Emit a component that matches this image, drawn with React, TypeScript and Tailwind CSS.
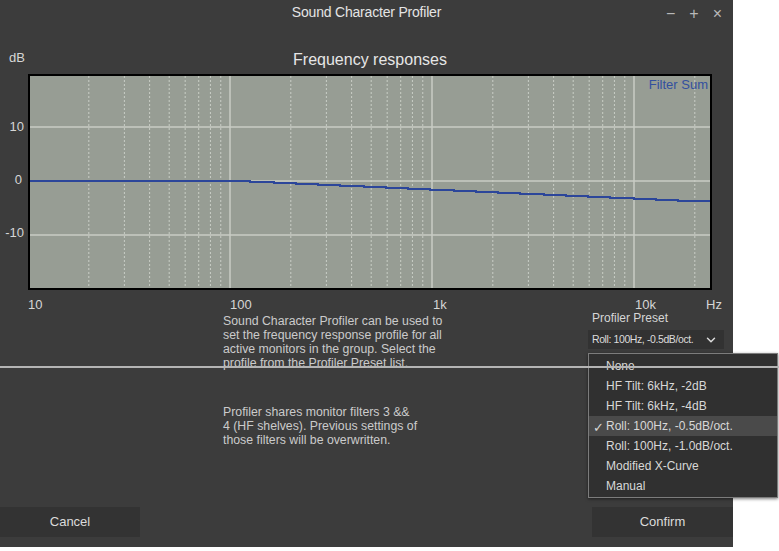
import { ChevronDown } from 'lucide-react';

const DECADE = 202;
const xOf = (f: number) => -2 + DECADE * Math.log10(f / 10);
const yOf = (db: number) => 105 - 5.4 * db;

const MINOR: number[] = [];
for (const base of [10, 100, 1000]) {
  for (let m = 2; m <= 9; m++) MINOR.push(base * m);
}
MINOR.push(20000);

const MAJOR = [100, 1000, 10000];
const H_LINES = [10, 0, -10];

const PRESETS = [
  'None',
  'HF Tilt: 6kHz, -2dB',
  'HF Tilt: 6kHz, -4dB',
  'Roll: 100Hz, -0.5dB/oct.',
  'Roll: 100Hz, -1.0dB/oct.',
  'Modified X-Curve',
  'Manual',
];
const SELECTED = 3;

function curvePoints() {
  const pts: string[] = [];
  let lastY = yOf(0);
  for (let x = 0; x <= 680; x += 2) {
    const f = 10 * Math.pow(10, (x + 2) / DECADE);
    const db = f <= 110 ? 0 : Math.max(-3.7, -0.5 * Math.log2(f / 110));
    // stepped look like the original plot
    const y = Math.round(yOf(db));
    if (y !== lastY) pts.push(`${x},${lastY}`);
    pts.push(`${x},${y}`);
    lastY = y;
  }
  return pts.join(' ');
}

function Plot() {
  return (
    <div className="w-[684px] h-[216px] border-2 border-black bg-[#979d94] relative">
      <svg width="680" height="212" className="block">
        {MINOR.map((f) => (
          <line
            key={f}
            x1={xOf(f)}
            x2={xOf(f)}
            y1={0}
            y2={212}
            stroke="#c9cec6"
            strokeWidth={1}
            strokeDasharray="2 2"
          />
        ))}
        {H_LINES.map((d) => (
          <line key={d} x1={0} x2={680} y1={yOf(d)} y2={yOf(d)} stroke="#c8cdc4" strokeWidth={1.5} />
        ))}
        {MAJOR.map((f) => (
          <line key={f} x1={xOf(f)} x2={xOf(f)} y1={0} y2={212} stroke="#c8cdc4" strokeWidth={1.5} />
        ))}
        <polyline points={curvePoints()} fill="none" stroke="#2c469a" strokeWidth={2} />
      </svg>
      <span className="absolute right-[2px] top-[-1px] text-[13px] text-[#33509f]">Filter Sum</span>
    </div>
  );
}

export default function App() {
  return (
    <div
      className="w-[779px] h-[551px] bg-white relative overflow-hidden"
      style={{ fontFamily: '"Liberation Sans", Arial, sans-serif' }}
    >
      <div className="w-[733px] h-[547px] bg-[#3c3c3c] flex flex-col">
        {/* title bar */}
        <div className="h-[25px] relative flex items-center justify-center">
          <span className="text-[14px] text-[#e4e4e4] tracking-[-0.2px]">Sound Character Profiler</span>
          <div className="absolute right-[11px] top-[2px] flex gap-[14px] text-[16px] text-[#b8b8b8]">
            <span>−</span>
            <span>+</span>
            <span>×</span>
          </div>
        </div>

        {/* heading */}
        <div className="h-[49px] flex items-end pb-[2px]">
          <span className="w-[28px] pl-[9px] text-[13px] text-[#d6d6d6] mb-[5px]">dB</span>
          <span className="w-[684px] text-center text-[16px] text-[#e6e6e6]">Frequency responses</span>
        </div>

        {/* chart */}
        <div className="flex">
          <div className="w-[28px] relative text-[13px] text-[#d6d6d6]">
            <span className="absolute right-[4px] top-[43px]">10</span>
            <span className="absolute right-[6px] top-[96px]">0</span>
            <span className="absolute right-[4px] top-[149px]">-10</span>
          </div>
          <Plot />
        </div>

        {/* x axis */}
        <div className="h-[24px] relative text-[13px] text-[#d6d6d6]">
          <span className="absolute left-[28px] top-[5px]">10</span>
          <span className="absolute left-[230px] top-[5px]">100</span>
          <span className="absolute left-[433px] top-[5px]">1k</span>
          <span className="absolute left-[635px] top-[5px]">10k</span>
          <span className="absolute left-[706px] top-[5px]">Hz</span>
        </div>

        {/* description + preset */}
        <div className="flex flex-1">
          <div className="ml-[223px] w-[240px] text-[12.3px] leading-[14px] text-[#cbcbcb]">
            <p className="w-[226px]">
              Sound Character Profiler can be used to set the frequency response profile for all active
              monitors in the group. Select the profile from the Profiler Preset list.
            </p>
            <p className="mt-[35px] whitespace-nowrap">
              Profiler shares monitor filters 3 &amp;&amp;
              <br />
              4 (HF shelves). Previous settings of
              <br />
              those filters will be overwritten.
            </p>
          </div>
          <div className="ml-[125px] flex flex-col">
            <span className="pl-[4px] text-[12px] text-[#d6d6d6] leading-[14px] mt-[-3px]">Profiler Preset</span>
            <div className="mt-[5px] w-[136px] h-[19px] bg-[#323232] flex items-center pl-[4px] pr-[6px] text-[10.5px] text-[#dcdcdc] tracking-[-0.4px]">
              <span className="flex-1">Roll: 100Hz, -0.5dB/oct.</span>
              <ChevronDown className="w-[14px] h-[14px]" strokeWidth={2.5} />
            </div>
          </div>
        </div>

        {/* buttons */}
        <div className="h-[40px] flex justify-between pb-[10px]">
          <button className="w-[140px] h-[30px] bg-[#333333] text-[13px] text-[#dcdcdc]">Cancel</button>
          <button className="w-[141px] h-[30px] bg-[#333333] text-[13px] text-[#dcdcdc]">Confirm</button>
        </div>
      </div>

      {/* open preset menu */}
      <div className="absolute left-[588px] top-[353px] w-[190px] h-[145px] bg-[#303030] border border-[#7c7c7c] pt-[2px] shadow-[0_1px_3px_rgba(0,0,0,0.5)]">
        {PRESETS.map((p, i) => (
          <div
            key={p}
            className={`h-[20px] flex items-center relative pl-[17px] text-[12px] text-[#d8d8d8] ${
              i === SELECTED ? 'bg-[#4a4a4a]' : ''
            }`}
          >
            {i === SELECTED && <span className="absolute left-[4px] top-[2px] text-[13px]">✓</span>}
            {p}
          </div>
        ))}
      </div>

      {/* stray screen line */}
      <div className="absolute left-0 top-[366px] w-[779px] h-[2px] bg-[#b4b4b4]" />
    </div>
  );
}
